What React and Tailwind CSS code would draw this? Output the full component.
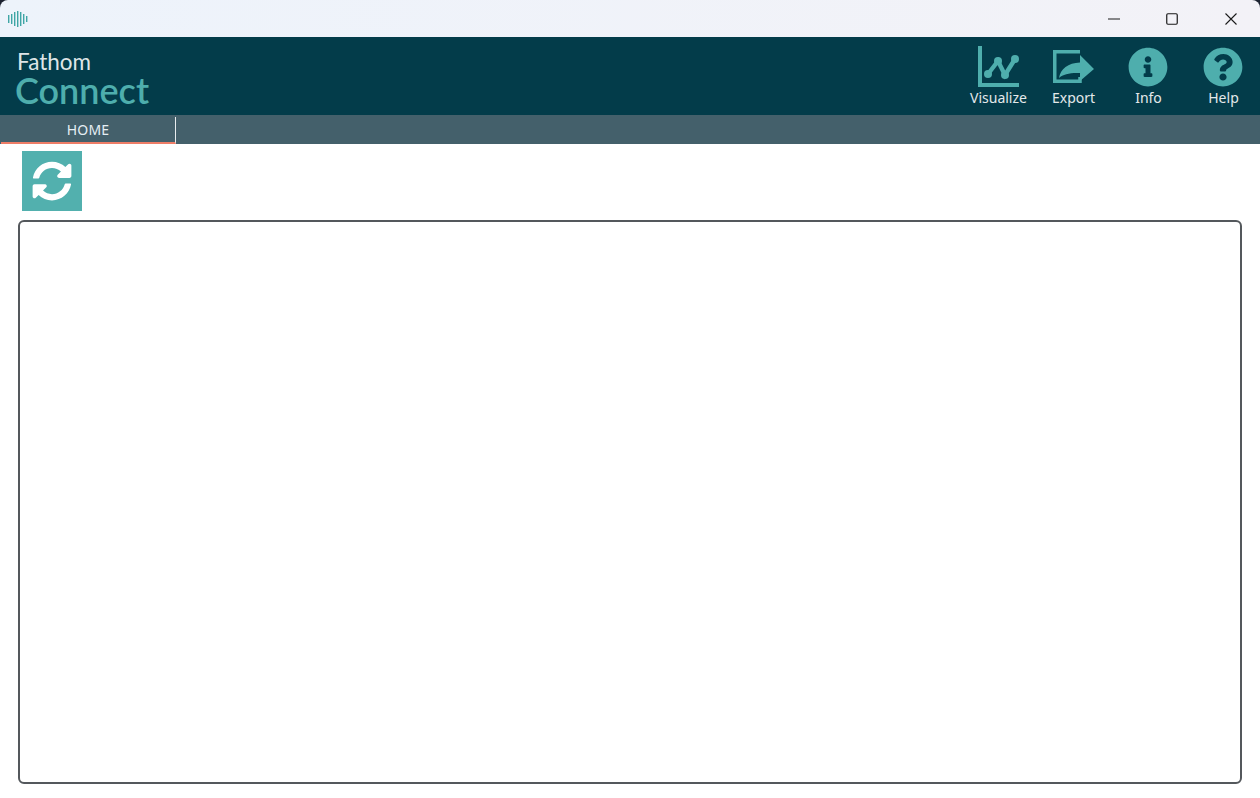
import { FaInfoCircle, FaQuestionCircle, FaSyncAlt } from "react-icons/fa";

const BAR_HEIGHTS = [8, 10, 14, 18, 14, 10, 6];

function WaveLogo() {
  return (
    <svg width="21" height="16" viewBox="0 0 21 16" className="text-[#3fa6a6]">
      {BAR_HEIGHTS.map((h, i) => (
        <rect key={i} x={i * 3} y={8 - h / 2} width="1.4" height={h} fill="currentColor" />
      ))}
    </svg>
  );
}

function ChartIcon() {
  return (
    <svg width="42" height="42" viewBox="0 0 42 42" fill="none" className="text-[#4eaead]">
      <path d="M2 0V39H41" stroke="currentColor" strokeWidth="4" />
      <path d="M10 28L20 15L27 29L37 13" stroke="currentColor" strokeWidth="4.4" />
      <circle cx="10" cy="28" r="4" fill="currentColor" />
      <circle cx="20" cy="15" r="4" fill="currentColor" />
      <circle cx="27" cy="29" r="4" fill="currentColor" />
      <circle cx="37" cy="13" r="4" fill="currentColor" />
    </svg>
  );
}

function ExportIcon() {
  return (
    <svg width="42" height="42" viewBox="0 0 42 42" fill="none" className="text-[#4eaead]">
      <path d="M27 5.75H1.75V35.25H27V31" stroke="currentColor" strokeWidth="3.5" />
      <path
        d="M6 32C7.5 23 15 17 27 16.5V9L41 23L27 35V27C18 26.5 10 28 6 32Z"
        fill="currentColor"
      />
    </svg>
  );
}

function ToolButton({ icon, label }) {
  return (
    <button className="flex w-[75px] flex-col items-center text-[14px] leading-[20px] text-[#e4e9ea]">
      <span className="flex h-[42px] items-center justify-center">{icon}</span>
      <span>{label}</span>
    </button>
  );
}

function App() {
  return (
    <div className="flex h-[798px] w-[1260px] flex-col overflow-hidden bg-[#1c2230] font-['Noto_Sans','Open_Sans',sans-serif]">
      {/* Title bar */}
      <div className="flex h-[37px] items-center justify-between rounded-t-[8px] bg-gradient-to-r from-[#edf3fb] to-[#f3f2f7] pl-[8px]">
        <WaveLogo />
        <div className="flex text-[#1a1a1a]">
          <div className="flex h-[37px] w-[58.5px] items-center justify-center">
            <svg width="12" height="12" viewBox="0 0 12 12">
              <path d="M0 6H12" stroke="currentColor" strokeWidth="1" />
            </svg>
          </div>
          <div className="flex h-[37px] w-[58.5px] items-center justify-center">
            <svg width="12" height="12" viewBox="0 0 12 12" fill="none">
              <rect x="0.75" y="0.75" width="10.5" height="10.5" rx="1.2" stroke="currentColor" strokeWidth="1.2" />
            </svg>
          </div>
          <div className="flex h-[37px] w-[58.5px] items-center justify-center">
            <svg width="12" height="12" viewBox="0 0 12 12">
              <path d="M0.5 0.5L11.5 11.5M11.5 0.5L0.5 11.5" stroke="currentColor" strokeWidth="1.1" />
            </svg>
          </div>
        </div>
      </div>

      {/* Header */}
      <div className="flex h-[78px] justify-between bg-[#033c4a] pt-[9px]">
        <div className="flex flex-col pl-[15px] font-['Lato',sans-serif]">
          <span className="ml-[2px] mt-[4px] h-[24px] text-[22.5px] leading-[24px] font-normal text-[#dfe5e7]">Fathom</span>
          <span className="h-[32px] text-[36px] leading-[32px] font-semibold text-[#4eaead]">Connect</span>
        </div>
        <div className="mr-[-1px] flex">
          <ToolButton icon={<ChartIcon />} label="Visualize" />
          <ToolButton icon={<ExportIcon />} label="Export" />
          <ToolButton icon={<FaInfoCircle className="mr-[1px] text-[40px] text-[#4eaead]" />} label="Info" />
          <ToolButton icon={<FaQuestionCircle className="mr-[1px] text-[40px] text-[#4eaead]" />} label="Help" />
        </div>
      </div>

      {/* Tabs */}
      <div className="flex h-[29px] bg-[#44606b]">
        <div className="ml-[1px] mt-[2px] flex h-[27px] w-[175px] items-center justify-center border-r border-r-[#e8ecee] border-b-2 border-b-[#ee7d67] text-[14px] tracking-[0.2px] text-[#e4eef4]">
          HOME
        </div>
      </div>

      {/* Content */}
      <div className="flex flex-1 flex-col bg-white px-[18px] pt-[7px] pb-[14px]">
        <button className="ml-[4px] flex h-[60px] w-[60px] items-center justify-center bg-[#52b0ae]">
          <FaSyncAlt className="text-[40px] text-white" />
        </button>
        <div className="mt-[9px] flex-1 rounded-[6px] border-2 border-[#54585c]" />
      </div>
    </div>
  );
}

export default App;
